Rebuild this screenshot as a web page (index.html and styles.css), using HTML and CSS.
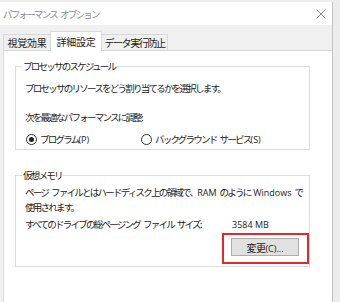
FILE: index.html
```html
<!DOCTYPE html>
<html lang="ja">
<head>
<meta charset="utf-8">
<link rel="stylesheet" href="styles.css">
</head>
<body>
<div class="screen">
  <div class="window">
    <div class="titlebar">
      <span class="title">パフォーマンス オプション</span>
      <svg class="close" width="10" height="10" viewBox="0 0 10 10"><path d="M0.5 0.5 L9.5 9.5 M9.5 0.5 L0.5 9.5" stroke="#8a8a8a" stroke-width="1" fill="none"/></svg>
    </div>
    <div class="body">
      <div class="tabs">
        <div class="tab t1">視覚効果</div>
        <div class="tab t2 active">詳細設定</div>
        <div class="tab t3">データ実行防止</div>
      </div>
      <div class="pane">
        <fieldset class="group g1">
          <legend>プロセッサのスケジュール</legend>
          <div class="line l1">プロセッサのリソースをどう割り当てるかを選択します。</div>
          <div class="line l2">次を最適なパフォーマンスに調整:</div>
          <div class="radios">
            <label class="radio r1"><span class="dot checked"></span>プログラム<span class="lat">(P)</span></label>
            <label class="radio r2"><span class="dot"></span>バックグラウンド サービス<span class="lat">(S)</span></label>
          </div>
        </fieldset>
        <fieldset class="group g2">
          <legend>仮想メモリ</legend>
          <div class="line m1">ページ ファイルとはハードディスク上の領域で、<span class="lat">RAM</span> のように <span class="lat">Windows</span> で</div>
          <div class="line">使用されます。</div>
          <div class="line size"><span class="sizelabel">すべてのドライブの総ページング ファイル サイズ:</span><span class="lat">3584 MB</span></div>
          <div class="btnrow">
            <div class="highlight"><button class="btn">変更<span class="lat">(C)...</span></button></div>
          </div>
        </fieldset>
      </div>
    </div>
  </div>
</div>
</body>
</html>
```

FILE: styles.css
```css
html, body {
  margin: 0;
  padding: 0;
}
body {
  width: 340px;
  height: 302px;
  overflow: hidden;
  background: #ececec;
  font-family: "Noto Sans CJK JP", "Noto Sans", sans-serif;
  font-size: 9.5px;
  letter-spacing: -1.75px;
  word-spacing: 2.5px;
  color: #1a1a1a;
  white-space: nowrap;
}
.lat {
  font-family: "Open Sans", "Noto Sans", sans-serif;
  font-size: 9px;
  letter-spacing: 0;
  word-spacing: 0;
}
.screen {
  padding-top: 2px;
  height: 300px;
  background: #ececec;
}
.window {
  width: 332px;
  height: 300px;
  overflow: hidden;
  background: #f0f0f0;
  border-right: 1px solid #c4c4c4;
}
.titlebar {
  height: 23px;
  background: #ffffff;
  display: flex;
  align-items: center;
  justify-content: space-between;
  padding: 0 6px 0 3px;
}
.title {
  color: #8c8c8c;
}
.close {
  display: block;
}
.body {
  padding-top: 6px;
}
.tabs {
  display: flex;
  align-items: flex-end;
  padding-left: 3px;
  height: 19px;
}
.tab {
  height: 15px;
  line-height: 16px;
  border: 1px solid #d9d9d9;
  border-bottom: none;
  background: #f0f0f0;
  text-align: center;
  font-size: 10px;
  letter-spacing: -0.3px;
  box-sizing: content-box;
}
.t1 {
  width: 46px;
}
.t2 {
  width: 50px;
  margin-left: -1px;
}
.t3 {
  width: 65px;
  margin-left: -1px;
  letter-spacing: -1.4px;
}
.tab.active {
  height: 19px;
  line-height: 20px;
  background: #ffffff;
  position: relative;
  z-index: 1;
  margin-bottom: -1px;
}
.pane {
  margin-left: 3px;
  width: 320px;
  height: 260px;
  background: #ffffff;
  border: 1px solid #d9d9d9;
  padding: 8px 10px 0 11px;
}
.group {
  margin: 0;
  width: 287px;
  border: 1px solid #dcdcdc;
  padding: 0 0 2px 6px;
  min-width: 0;
}
.group legend {
  padding: 0 1px;
  line-height: 14px;
}
.line {
  line-height: 15px;
  padding-left: 3px;
}
.l1 {
  margin-top: 8px;
}
.l2 {
  margin-top: 14px;
}
.radios {
  display: flex;
  margin-top: 7px;
  height: 15px;
  line-height: 15px;
  padding-left: 4px;
}
.radio {
  display: flex;
  align-items: center;
}
.r1 {
  width: 115px;
}
.dot {
  width: 9px;
  height: 9px;
  border: 1px solid #333333;
  border-radius: 50%;
  margin-right: 3px;
  box-sizing: content-box;
  display: flex;
  align-items: center;
  justify-content: center;
}
.dot.checked::after {
  content: "";
  width: 5px;
  height: 5px;
  border-radius: 50%;
  background: #222222;
}
.g2 {
  margin-top: 18px;
}
.m1 {
  margin-top: 3px;
}
.size {
  margin-top: 2px;
  display: flex;
}
.sizelabel {
  width: 207px;
}
.btnrow {
  display: flex;
  justify-content: flex-end;
  margin-top: 1px;
}
.highlight {
  border: 2px solid #e8262c;
  padding: 3px 8px 6px 7px;
}
.btn {
  width: 68px;
  height: 18px;
  background: #e1e1e1;
  border: 1px solid #adadad;
  font-family: inherit;
  font-size: 10px;
  letter-spacing: -0.5px;
  color: #1a1a1a;
  padding: 0;
  margin: 0;
  display: block;
}
```
